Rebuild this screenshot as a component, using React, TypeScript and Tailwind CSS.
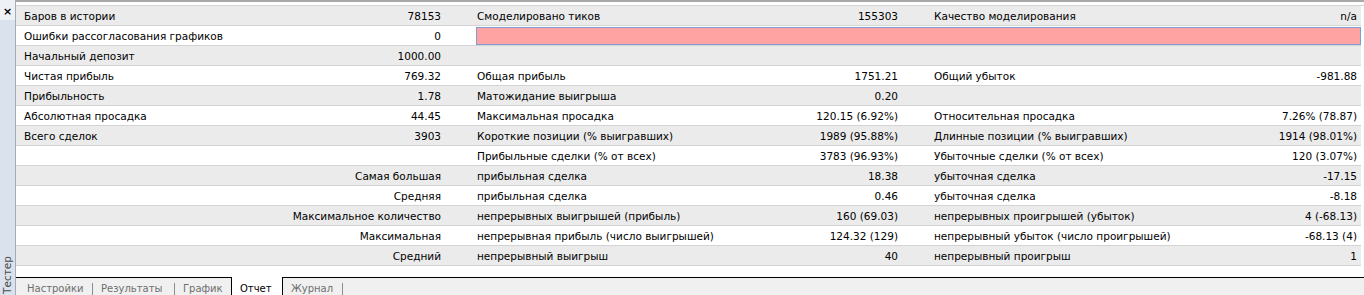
import React from "react";

type Cell = { l?: string; v?: string; right?: string };
type Row = { g1: Cell; g2?: Cell; g3?: Cell; pink?: boolean };

const rows: Row[] = [
  { g1: { l: "Баров в истории", v: "78153" }, g2: { l: "Смоделировано тиков", v: "155303" }, g3: { l: "Качество моделирования", v: "n/a" } },
  { g1: { l: "Ошибки рассогласования графиков", v: "0" }, pink: true },
  { g1: { l: "Начальный депозит", v: "1000.00" } },
  { g1: { l: "Чистая прибыль", v: "769.32" }, g2: { l: "Общая прибыль", v: "1751.21" }, g3: { l: "Общий убыток", v: "-981.88" } },
  { g1: { l: "Прибыльность", v: "1.78" }, g2: { l: "Матожидание выигрыша", v: "0.20" } },
  { g1: { l: "Абсолютная просадка", v: "44.45" }, g2: { l: "Максимальная просадка", v: "120.15 (6.92%)" }, g3: { l: "Относительная просадка", v: "7.26% (78.87)" } },
  { g1: { l: "Всего сделок", v: "3903" }, g2: { l: "Короткие позиции (% выигравших)", v: "1989 (95.88%)" }, g3: { l: "Длинные позиции (% выигравших)", v: "1914 (98.01%)" } },
  { g1: {}, g2: { l: "Прибыльные сделки (% от всех)", v: "3783 (96.93%)" }, g3: { l: "Убыточные сделки (% от всех)", v: "120 (3.07%)" } },
  { g1: { right: "Самая большая" }, g2: { l: "прибыльная сделка", v: "18.38" }, g3: { l: "убыточная сделка", v: "-17.15" } },
  { g1: { right: "Средняя" }, g2: { l: "прибыльная сделка", v: "0.46" }, g3: { l: "убыточная сделка", v: "-8.18" } },
  { g1: { right: "Максимальное количество" }, g2: { l: "непрерывных выигрышей (прибыль)", v: "160 (69.03)" }, g3: { l: "непрерывных проигрышей (убыток)", v: "4 (-68.13)" } },
  { g1: { right: "Максимальная" }, g2: { l: "непрерывная прибыль (число выигрышей)", v: "124.32 (129)" }, g3: { l: "непрерывный убыток (число проигрышей)", v: "-68.13 (4)" } },
  { g1: { right: "Средний" }, g2: { l: "непрерывный выигрыш", v: "40" }, g3: { l: "непрерывный проигрыш", v: "1" } },
];

function Group({ c, first, w }: { c?: Cell; first?: boolean; w: string }) {
  return (
    <div className={`${w} flex items-center justify-between pt-[2px] ${first ? "pl-[8px]" : "pl-[32px]"} pr-[4px] whitespace-nowrap`}>
      {c?.right ? (
        <span className="ml-auto">{c.right}</span>
      ) : (
        <>
          <span>{c?.l ?? ""}</span>
          <span>{c?.v ?? ""}</span>
        </>
      )}
    </div>
  );
}

function Sep() {
  return (
    <div className="w-[1px] border-t border-black flex items-start">
      <div className="mt-[5px] w-[1px] h-[12px] bg-[#8c8c8c]" />
    </div>
  );
}

export default function App() {
  return (
    <div className="w-[1364px] h-[295px] flex bg-white text-black font-['DejaVu_Sans',sans-serif] text-[10.5px] overflow-hidden">
      {/* sidebar */}
      <div className="w-[16px] h-full flex flex-col border-r border-[#a3acb8] bg-[#d9e2ed]">
        <div className="h-[20px] bg-[#eef1f5] flex items-start justify-center pt-[6px] text-[11px] font-bold leading-none">×</div>
        <div className="flex-1 flex flex-col justify-end items-center pb-[1px]">
          <span className="[writing-mode:vertical-rl] rotate-180 text-[#4a4a4a] leading-none">Тестер</span>
        </div>
      </div>
      {/* main */}
      <div className="flex-1 flex flex-col">
        <div className="h-[2px] bg-[#a9a9a9]" />
        <div className="h-[3px] bg-white" />
        <div className="h-[1px] bg-[#d4d4d4]" />
        <div className="flex flex-col w-[1345px]">
          {rows.map((r, i) => (
            <div
              key={i}
              className={`h-[20px] flex border-b border-[#d4d4d4] ${i % 2 === 0 ? "bg-[#ebebeb]" : "bg-white"}`}
            >
              <Group c={r.g1} first w="w-[429px]" />
              {r.pink ? (
                <div className="flex-1 flex items-center pl-[31px]">
                  <div className="h-[18px] w-full bg-[#ffa2a2] border border-[#7b9fd4]" />
                </div>
              ) : (
                <>
                  <Group c={r.g2} w="w-[457px]" />
                  <Group c={r.g3} w="w-[459px]" />
                </>
              )}
            </div>
          ))}
        </div>
        <div className="flex-1 bg-white" />
        {/* tab bar */}
        <div className="h-[18px] flex bg-[#f0f0f0] text-[#6e6e6e] text-[10px]">
          <div className="w-[76px] border-t border-black pl-[11px] pt-[3px]">Настройки</div>
          <Sep />
          <div className="w-[81px] border-t border-black pl-[8px] pt-[3px]">Результаты</div>
          <Sep />
          <div className="w-[56px] border-t border-black pl-[8px] pt-[3px]">График</div>
          <div className="w-[52px] bg-white border-l border-r border-black pl-[8px] pt-[4px] text-black">Отчет</div>
          <div className="w-[59px] border-t border-black pl-[8px] pt-[3px]">Журнал</div>
          <Sep />
          <div className="flex-1 border-t border-black" />
        </div>
      </div>
    </div>
  );
}
